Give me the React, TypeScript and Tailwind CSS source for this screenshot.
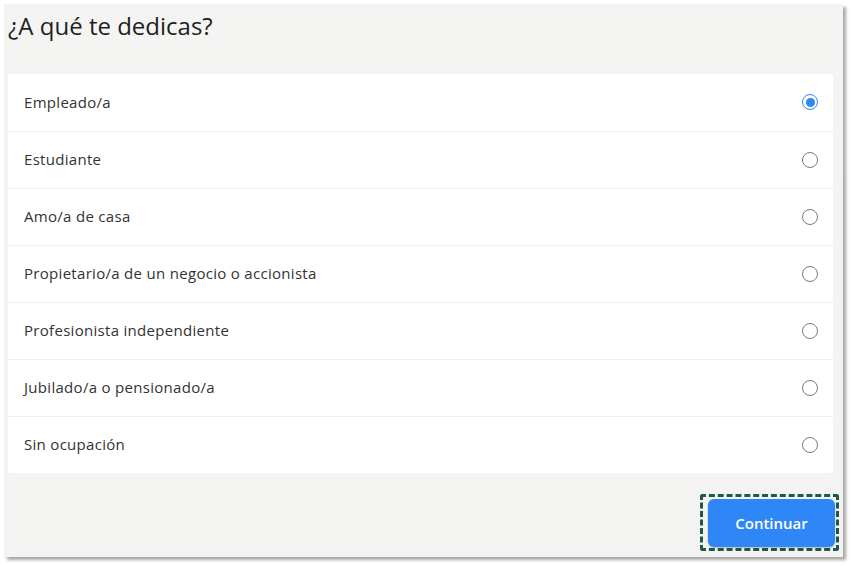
import { useState } from "react"

const options = [
  "Empleado/a",
  "Estudiante",
  "Amo/a de casa",
  "Propietario/a de un negocio o accionista",
  "Profesionista independiente",
  "Jubilado/a o pensionado/a",
  "Sin ocupación",
]

export default function App() {
  const [selected, setSelected] = useState(0)

  return (
    <div className="w-[854px] h-[566px] bg-white pl-[4px] pt-[4px] font-['Open_Sans',sans-serif]">
      <div className="w-[839px] h-[553px] bg-gradient-to-b from-[#f4f4f2] to-[#f3f3f1] shadow-[3px_3px_3px_rgba(0,0,0,0.35)] px-[4px] flex flex-col">
        {/* Título */}
        <div className="h-[70px] pt-[6px]">
          <h1 className="text-[24px] leading-[32px] text-[#1f1f1f]">¿A qué te dedicas?</h1>
        </div>

        {/* Opciones */}
        <div className="w-[825px] bg-white rounded-[3px]">
          {options.map((label, i) => (
            <label
              key={label}
              onClick={() => setSelected(i)}
              className={
                "flex items-center justify-between h-[57px] pl-[16px] pr-[15px] pb-[1px] cursor-pointer " +
                (i > 0 ? "border-t border-[#efefef]" : "")
              }
            >
              <span className="text-[15px] tracking-[0.3px] text-[#333333]">{label}</span>
              {selected === i ? (
                <span className="w-[16px] h-[16px] rounded-full border-[1.5px] border-[#2f88f2] flex items-center justify-center">
                  <span className="w-[9px] h-[9px] rounded-full bg-[#2f88f2]" />
                </span>
              ) : (
                <span className="w-[16px] h-[16px] rounded-full border border-[#7a7a7a]" />
              )}
            </label>
          ))}
        </div>

        {/* Botón */}
        <div className="flex justify-end pt-[21px]">
          <div className="border-[3px] border-dashed border-[#1d5a4c] pl-[5px] pr-[1px] pt-[2px] pb-[1px] rounded-[3px]">
            <button className="w-[127px] h-[48px] rounded-[6px] bg-[#2f86f6] text-white text-[15px] font-semibold shadow-[0_1px_2px_rgba(0,0,0,0.25)]">
              Continuar
            </button>
          </div>
        </div>
      </div>
    </div>
  )
}
